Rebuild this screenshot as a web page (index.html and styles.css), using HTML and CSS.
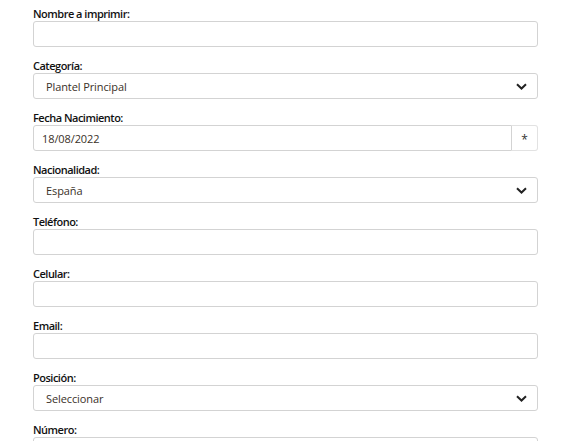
FILE: index.html
```html
<!DOCTYPE html>
<html lang="es">
<head>
<meta charset="utf-8">
<link rel="stylesheet" href="styles.css">
</head>
<body>
<form class="form">
  <div class="group">
    <label class="label">Nombre a imprimir:</label>
    <div class="field"></div>
  </div>
  <div class="group">
    <label class="label">Categoría:</label>
    <div class="field select"><span class="value">Plantel Principal</span><svg class="chev" width="11" height="7" viewBox="0 0 11 7"><path d="M1 1.2 L5.5 5.5 L10 1.2" fill="none" stroke="#222" stroke-width="2"/></svg></div>
  </div>
  <div class="group">
    <label class="label">Fecha Nacimiento:</label>
    <div class="input-group">
      <div class="field date"><span class="value">18/08/2022</span></div>
      <div class="addon">*</div>
    </div>
  </div>
  <div class="group">
    <label class="label">Nacionalidad:</label>
    <div class="field select"><span class="value">España</span><svg class="chev" width="11" height="7" viewBox="0 0 11 7"><path d="M1 1.2 L5.5 5.5 L10 1.2" fill="none" stroke="#222" stroke-width="2"/></svg></div>
  </div>
  <div class="group">
    <label class="label">Teléfono:</label>
    <div class="field"></div>
  </div>
  <div class="group">
    <label class="label">Celular:</label>
    <div class="field"></div>
  </div>
  <div class="group">
    <label class="label">Email:</label>
    <div class="field"></div>
  </div>
  <div class="group">
    <label class="label">Posición:</label>
    <div class="field select"><span class="value">Seleccionar</span><svg class="chev" width="11" height="7" viewBox="0 0 11 7"><path d="M1 1.2 L5.5 5.5 L10 1.2" fill="none" stroke="#222" stroke-width="2"/></svg></div>
  </div>
  <div class="group">
    <label class="label">Número:</label>
    <div class="field"></div>
  </div>
</form>
</body>
</html>
```
FILE: styles.css
```css
html, body {
  margin: 0;
  padding: 0;
  background: #fff;
  overflow: hidden;
}
body {
  font-family: "Open Sans", "Liberation Sans", sans-serif;
  color: #222;
}
.form {
  padding: 6px 42px 0 33px;
  width: 505px;
}
.group {
  margin-bottom: 11px;
}
.label {
  display: block;
  font-size: 11px;
  font-weight: 600;
  letter-spacing: -0.5px;
  line-height: 15px;
  color: #111;
}
.field {
  box-sizing: border-box;
  height: 26px;
  border: 1px solid #d3d3d3;
  border-radius: 3px;
  background: #fff;
  display: flex;
  align-items: center;
  padding: 0 12px;
  font-size: 11px;
  letter-spacing: -0.1px;
  color: #3a3128;
}
.select {
  justify-content: space-between;
}
.chev {
  margin-right: -2px;
}
.input-group {
  display: flex;
}
.date {
  flex: 1;
  padding-left: 8px;
  border-radius: 3px 0 0 3px;
}
.addon {
  box-sizing: border-box;
  width: 26px;
  height: 26px;
  border: 1px solid #e2e2e2;
  border-left: none;
  border-radius: 0 3px 3px 0;
  display: flex;
  align-items: center;
  justify-content: center;
  font-size: 12px;
  color: #333;
  padding-top: 3px;
}
```
